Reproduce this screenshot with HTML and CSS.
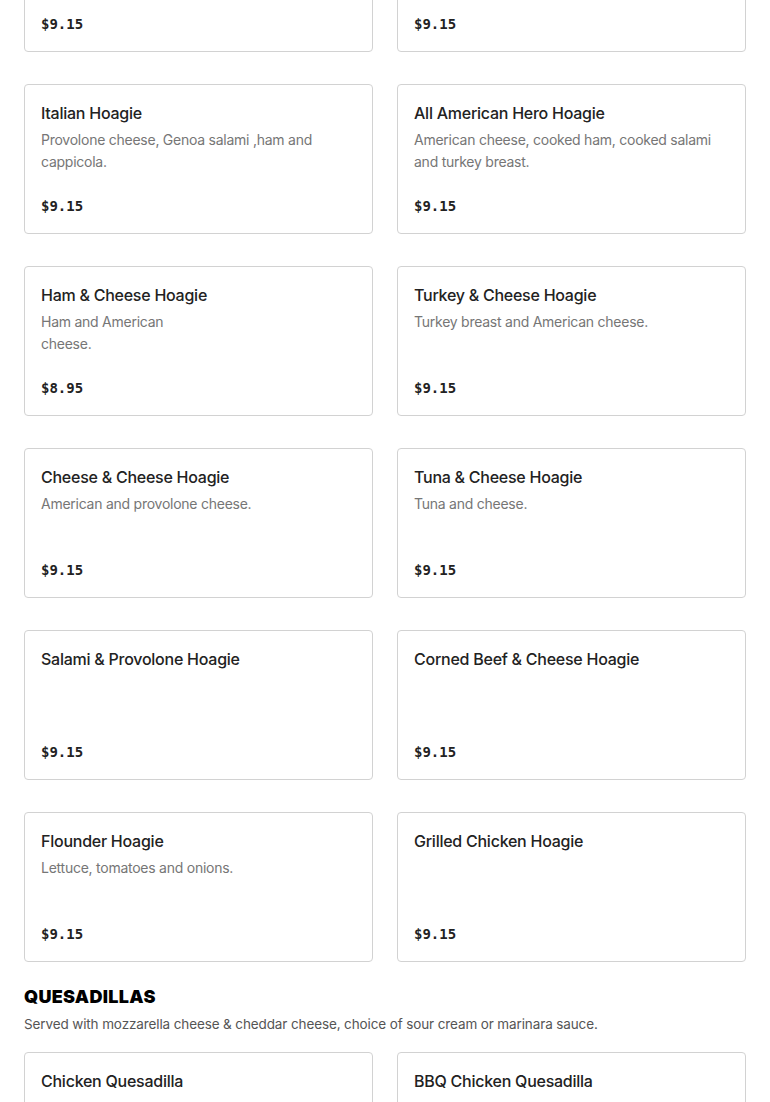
FILE: index.html
```html
<!DOCTYPE html>
<html lang="en">

<head>
	<meta charset="UTF-8">
	<meta name="viewport" content="width=device-width, initial-scale=1.0">
	<title>Menu</title>
	<link rel="stylesheet" href="styles.css">
</head>

<body>
	<main class="menu">
		<section class="menu-section">
			<div class="item-grid">
				<div class="item-card">
					<p class="price">$9.15</p>
				</div>
				<div class="item-card">
					<p class="price">$9.15</p>
				</div>
				<div class="item-card">
					<h3>Italian Hoagie</h3>
					<p class="desc">Provolone cheese, Genoa salami ,ham and cappicola.</p>
					<p class="price">$9.15</p>
				</div>
				<div class="item-card">
					<h3>All American Hero Hoagie</h3>
					<p class="desc">American cheese, cooked ham, cooked salami and turkey breast.</p>
					<p class="price">$9.15</p>
				</div>
				<div class="item-card">
					<h3>Ham &amp; Cheese Hoagie</h3>
					<p class="desc">Ham and American<br>cheese.</p>
					<p class="price">$8.95</p>
				</div>
				<div class="item-card">
					<h3>Turkey &amp; Cheese Hoagie</h3>
					<p class="desc">Turkey breast and American cheese.</p>
					<p class="price">$9.15</p>
				</div>
				<div class="item-card">
					<h3>Cheese &amp; Cheese Hoagie</h3>
					<p class="desc">American and provolone cheese.</p>
					<p class="price">$9.15</p>
				</div>
				<div class="item-card">
					<h3>Tuna &amp; Cheese Hoagie</h3>
					<p class="desc">Tuna and cheese.</p>
					<p class="price">$9.15</p>
				</div>
				<div class="item-card">
					<h3>Salami &amp; Provolone Hoagie</h3>
					<p class="price">$9.15</p>
				</div>
				<div class="item-card">
					<h3>Corned Beef &amp; Cheese Hoagie</h3>
					<p class="price">$9.15</p>
				</div>
				<div class="item-card">
					<h3>Flounder Hoagie</h3>
					<p class="desc">Lettuce, tomatoes and onions.</p>
					<p class="price">$9.15</p>
				</div>
				<div class="item-card">
					<h3>Grilled Chicken Hoagie</h3>
					<p class="price">$9.15</p>
				</div>
			</div>
		</section>

		<section class="menu-section">
			<h2 class="section-title">QUESADILLAS</h2>
			<p class="section-note">Served with mozzarella cheese &amp; cheddar cheese, choice of sour cream or marinara sauce.</p>
			<div class="item-grid">
				<div class="item-card">
					<h3>Chicken Quesadilla</h3>
				</div>
				<div class="item-card">
					<h3>BBQ Chicken Quesadilla</h3>
				</div>
			</div>
		</section>
	</main>
</body>

</html>
```

FILE: styles.css
```css
body {
	font-family: 'Inter', 'Liberation Sans', sans-serif;
	margin: 0;
	padding: 0;
	background-color: #fff;
	color: #222;
}

.menu {
	margin-top: -98px;
	padding: 0 24px;
}

.menu-section {
	margin-bottom: 23px;
}

.section-title {
	font-size: 18px;
	font-weight: 900;
	line-height: 24px;
	letter-spacing: 0.3px;
	color: #000;
	margin: 0;
}

.section-note {
	font-size: 13.5px;
	line-height: 20px;
	letter-spacing: -0.12px;
	color: #555;
	margin: 5px 0 18px;
}

.item-grid {
	display: grid;
	grid-template-columns: 1fr 1fr;
	column-gap: 24px;
	row-gap: 32px;
}

.item-card {
	display: flex;
	flex-direction: column;
	height: 150px;
	box-sizing: border-box;
	padding: 16px;
	border: 1px solid #d2d2d2;
	border-radius: 4px;
}

.item-card h3 {
	font-size: 16px;
	font-weight: 500;
	line-height: 24px;
	letter-spacing: -0.25px;
	margin: 0;
	color: #222;
}

.item-card .desc {
	font-size: 14px;
	line-height: 22px;
	letter-spacing: -0.25px;
	color: #767676;
	margin: 4px 0 0;
}

.item-card .price {
	margin: auto 0 0;
	font-family: 'DejaVu Sans Mono', monospace;
	font-size: 14px;
	font-weight: bold;
	line-height: 22px;
	color: #222;
}
```
